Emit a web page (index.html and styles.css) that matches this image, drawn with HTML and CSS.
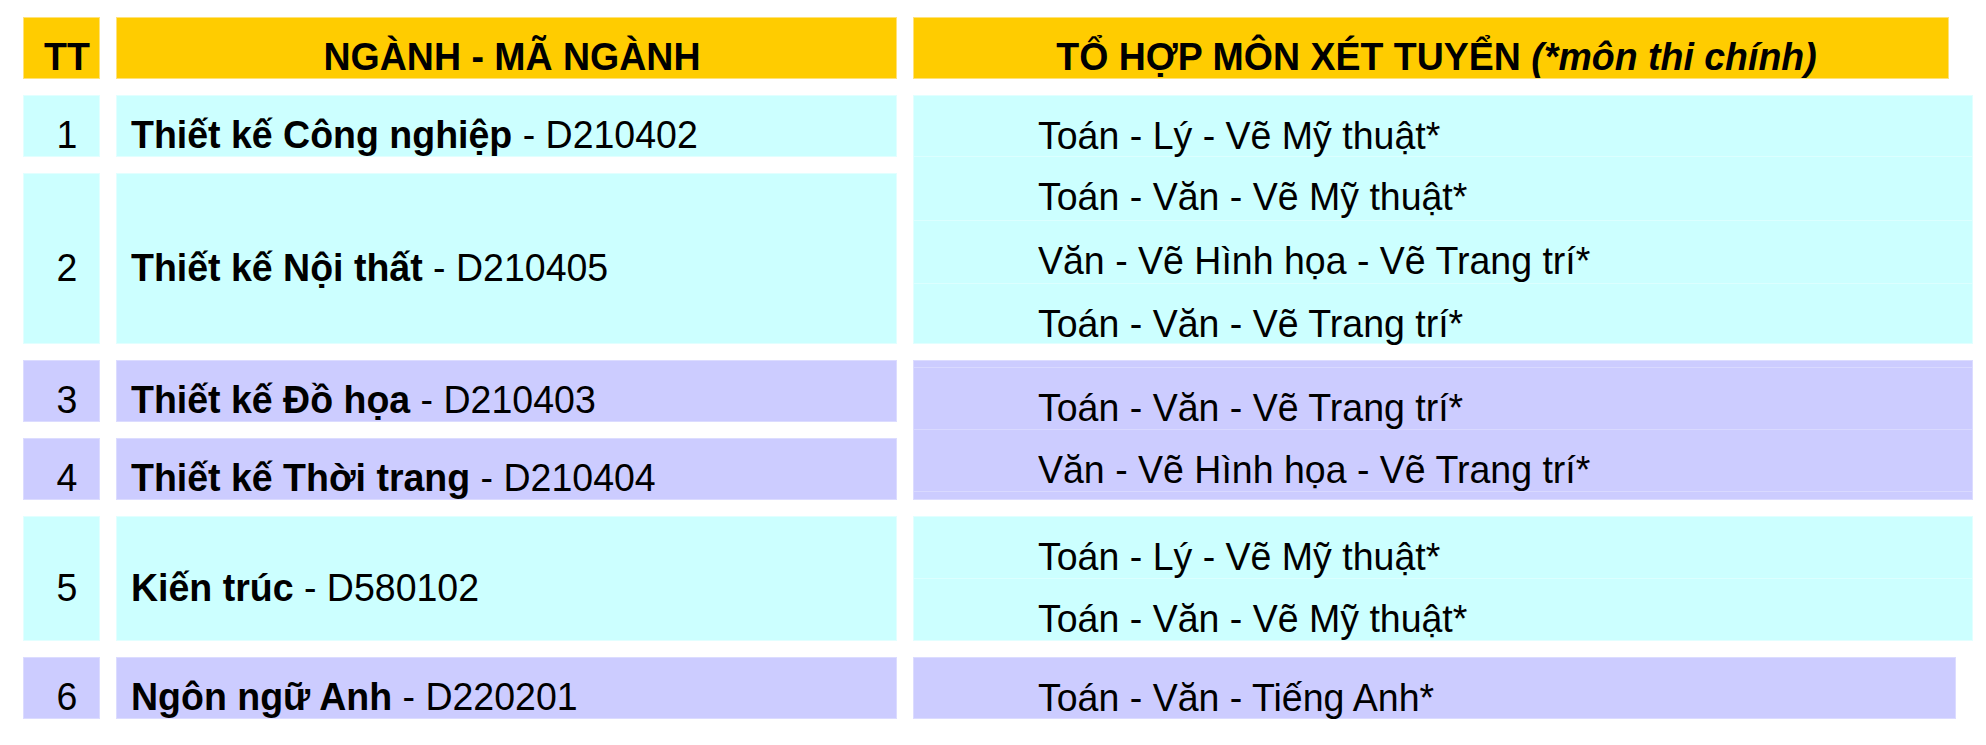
FILE: index.html
```html
<!DOCTYPE html>
<html lang="vi">
<head>
<meta charset="utf-8">
<title>Tổ hợp môn xét tuyển</title>
<link rel="stylesheet" href="styles.css">
</head>
<body>
<div class="table">
  <div class="cell tt yellow hd"><span class="t">TT</span></div>
  <div class="cell ng yellow hd hcenter"><span class="t">NGÀNH - MÃ NGÀNH</span></div>
  <div class="cell th yellow hd hcenter"><span class="t">TỔ HỢP MÔN XÉT TUYỂN <i>(*môn thi chính)</i></span></div>

  <div class="cell tt cyan"><span class="t">1</span></div>
  <div class="cell ng cyan"><span class="t"><b>Thiết kế Công nghiệp</b> - D210402</span></div>
  <div class="right g1 cyan">
    <div class="line l61 sep"><span class="t">Toán - Lý - Vẽ Mỹ thuật*</span></div>
    <div class="line l64 sep"><span class="t">Toán - Văn - Vẽ Mỹ thuật*</span></div>
    <div class="line l63 sep"><span class="t">Văn - Vẽ Hình họa - Vẽ Trang trí*</span></div>
    <div class="line l61"><span class="t">Toán - Văn - Vẽ Trang trí*</span></div>
  </div>

  <div class="cell tt cyan"><span class="t">2</span></div>
  <div class="cell ng cyan"><span class="t"><b>Thiết kế Nội thất</b> - D210405</span></div>

  <div class="cell tt lav"><span class="t">3</span></div>
  <div class="cell ng lav"><span class="t"><b>Thiết kế Đồ họa</b> - D210403</span></div>
  <div class="right g2 lav">
    <div class="spacer s8 sep"></div>
    <div class="line l62 sep"><span class="t">Toán - Văn - Vẽ Trang trí*</span></div>
    <div class="line l62 sep"><span class="t">Văn - Vẽ Hình họa - Vẽ Trang trí*</span></div>
  </div>

  <div class="cell tt lav"><span class="t">4</span></div>
  <div class="cell ng lav"><span class="t"><b>Thiết kế Thời trang</b> - D210404</span></div>

  <div class="cell tt cyan"><span class="t">5</span></div>
  <div class="cell ng cyan"><span class="t"><b>Kiến trúc</b> - D580102</span></div>
  <div class="right g3 cyan">
    <div class="line l62 sep"><span class="t">Toán - Lý - Vẽ Mỹ thuật*</span></div>
    <div class="line l63"><span class="t">Toán - Văn - Vẽ Mỹ thuật*</span></div>
  </div>

  <div class="cell tt lav"><span class="t">6</span></div>
  <div class="cell ng lav"><span class="t"><b>Ngôn ngữ Anh</b> - D220201</span></div>
  <div class="right g4 lav">
    <div class="line l62"><span class="t">Toán - Văn - Tiếng Anh*</span></div>
  </div>
</div>
</body>
</html>
```

FILE: styles.css
```css
html, body {
  margin: 0;
  padding: 0;
  background: #ffffff;
  overflow: hidden;
}

body {
  font-family: "Liberation Sans", Arial, sans-serif;
  font-size: 37.5px;
  color: #000000;
}

.table {
  display: grid;
  grid-template-columns: 77px 781px 1060px;
  grid-template-rows: 62px 62px 171px 62px 62px 125px 62px;
  column-gap: 16px;
  row-gap: 16px;
  padding: 17px 0 0 23px;
  width: max-content;
}

.t {
  display: inline-block;
  white-space: pre;
  transform: scaleY(1.045);
  transform-origin: 50% 75%;
}

.hd {
  font-weight: bold;
}

.hd i {
  font-weight: bold;
  font-style: italic;
}

.cell {
  box-sizing: border-box;
  display: flex;
  align-items: center;
  padding-top: 19px;
  white-space: nowrap;
}

.tt {
  justify-content: center;
  padding-left: 11px;
}

.ng {
  padding-left: 14px;
}

.th {
  width: 1036px;
}

.hcenter {
  justify-content: center;
  padding-left: 11px;
}

.yellow {
  background: #ffcc00;
  border: 1px solid #ffe27a;
}

.cyan {
  background: #ccffff;
  border: 1px solid #e2ffff;
}

.lav {
  background: #ccccff;
  border: 1px solid #dcdcff;
}

.right {
  grid-column: 3;
  box-sizing: border-box;
  display: flex;
  flex-direction: column;
  width: 1060px;
}

.g1 { grid-row: 2 / span 2; }
.g2 { grid-row: 4 / span 2; }
.g3 { grid-row: 6; }
.g4 { grid-row: 7; width: 1043px; }

.line {
  box-sizing: border-box;
  padding-left: 124px;
  padding-top: 19px;
  line-height: 42px;
  white-space: nowrap;
  flex: none;
}

.l61 { height: 61px; }
.l62 { height: 62px; }
.l63 { height: 63px; }
.l64 { height: 64px; }

.spacer { box-sizing: border-box; flex: none; }
.s8 { height: 7px; }

.cyan .sep { border-bottom: 1px solid #dcffff; }
.lav .sep { border-bottom: 1px solid #d9d9ff; }
```
